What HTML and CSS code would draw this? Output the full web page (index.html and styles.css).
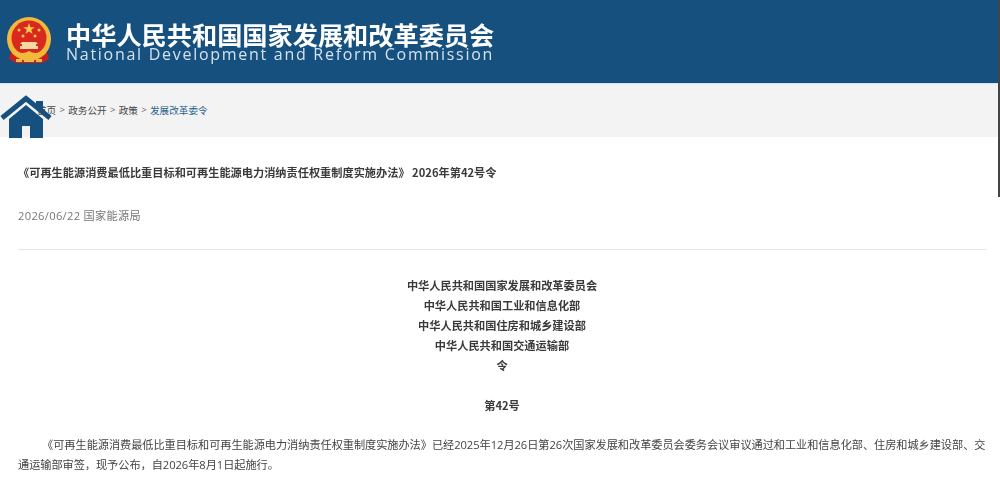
FILE: index.html
```html
<!DOCTYPE html>
<html lang="zh-CN">
<head>
<meta charset="utf-8">
<title>发展改革委令</title>
<link rel="stylesheet" href="styles.css">
</head>
<body>
<header class="site-header">
  <svg class="emblem" width="46" height="50" viewBox="0 0 46 50" aria-hidden="true">
    <path d="M6 33 L3 43 L10 47 H36 L43 43 L40 33 Z" fill="#c8201c"/>
    <circle cx="23" cy="23" r="22" fill="#f3b93b"/>
    <circle cx="23" cy="22" r="17.5" fill="#d9281e"/>
    <path d="M23 7l1.4 4.2h4.4l-3.6 2.6 1.4 4.2-3.6-2.6-3.6 2.6 1.4-4.2-3.6-2.6h4.4z" fill="#f8cf4a"/>
    <circle cx="13" cy="14" r="1.5" fill="#f8cf4a"/>
    <circle cx="33" cy="14" r="1.5" fill="#f8cf4a"/>
    <circle cx="17" cy="20" r="1.5" fill="#f8cf4a"/>
    <circle cx="29" cy="20" r="1.5" fill="#f8cf4a"/>
    <path d="M16 26h14l2 2h-2v2h2v3H14v-3h2v-2h-2z" fill="#f5d9a0"/>
    <path d="M8 33 Q15 40 23 35 Q31 40 38 33 L40 37 Q31 45 23 40 Q15 45 6 37 Z" fill="#f3b93b"/>
    <path d="M18 41h10v5H18z" fill="#f3b93b"/>
    <path d="M10 43h6v3h-6zM30 43h6v3h-6z" fill="#f3b93b"/>
  </svg>
  <div class="brand">
    <div class="brand-cn">中华人民共和国国家发展和改革委员会</div>
    <div class="brand-en">National Development and Reform Commission</div>
  </div>
</header>

<nav class="crumbs">
  <a class="crumb">首页</a><span class="sep">&gt;</span>
  <a class="crumb">政务公开</a><span class="sep">&gt;</span>
  <a class="crumb">政策</a><span class="sep">&gt;</span>
  <a class="crumb current">发展改革委令</a>
  <svg class="home" width="52" height="43" viewBox="0 0 52 43" aria-hidden="true">
    <path d="M36 6h7v12l-7-5z" fill="#15507f"/>
    <path d="M2 23 L26 3.5 L50 23" fill="none" stroke="#15507f" stroke-width="5"/>
    <path d="M26 10 L43 24 V43 H30 V31 H22 V43 H9 V24 Z" fill="#15507f"/>
  </svg>
</nav>

<main class="article">
  <h1 class="title">《可再生能源消费最低比重目标和可再生能源电力消纳责任权重制度实施办法》 2026年第42号令</h1>
  <div class="meta">2026/06/22 国家能源局</div>
  <div class="content">
    <p class="center">中华人民共和国国家发展和改革委员会</p>
    <p class="center">中华人民共和国工业和信息化部</p>
    <p class="center">中华人民共和国住房和城乡建设部</p>
    <p class="center">中华人民共和国交通运输部</p>
    <p class="center">令</p>
    <p class="center number">第42号</p>
    <p class="para">《可再生能源消费最低比重目标和可再生能源电力消纳责任权重制度实施办法》已经2025年12月26日第26次国家发展和改革委员会委务会议审议通过和工业和信息化部、住房和城乡建设部、交通运输部审签，现予公布，自2026年8月1日起施行。</p>
  </div>
</main>

<div class="scroll-thumb"></div>
</body>
</html>
```
FILE: styles.css
```css
* { box-sizing: border-box; }
html, body { margin: 0; padding: 0; height: 480px; overflow: hidden; background: #fff; }
body { font-family: "Open Sans", "Noto Sans CJK SC", sans-serif; color: #333; position: relative; }

.site-header {
  height: 84px;
  background: #15507f;
  border-bottom: 1px solid #cfe6f7;
  display: flex;
  align-items: flex-start;
  padding: 16px 0 0 6px;
  gap: 14px;
}
.emblem { filter: blur(.4px); flex: none; }
.brand { color: #fff; filter: blur(.3px); }
.brand-cn {
  font-family: "Noto Sans CJK SC", sans-serif;
  font-size: 25.2px;
  font-weight: 700;
  line-height: 24px;
  margin-top: 6px;
  white-space: nowrap;
}
.brand-en {
  font-family: "Open Sans", sans-serif;
  font-size: 16px;
  line-height: 15px;
  margin-top: 1px;
  letter-spacing: 1.72px;
  color: #d5e2ee;
  white-space: nowrap;
}

.crumbs {
  height: 53px;
  background: #f3f3f3;
  position: relative;
  display: flex;
  align-items: center;
  padding: 0 0 2px 37px;
  font-family: "Noto Sans CJK SC", sans-serif;
  font-size: 9.6px;
  color: #444;
}
.home { position: absolute; left: 0; top: 11px; filter: blur(.4px); }
.crumb { position: relative; }
.current { color: #2a5f8c; }
.sep { margin: 0 3.3px; color: #666; font-family: "Open Sans", sans-serif; }

.article { padding: 0 14px 0 18px; filter: blur(.25px); }
.title {
  margin: 0;
  padding-top: 27px;
  font-family: "Noto Sans CJK SC", sans-serif;
  font-size: 11.2px;
  line-height: 16px;
  font-weight: 700;
  color: #3a3a3a;
  white-space: nowrap;
}
.meta {
  margin-top: 28px;
  padding-bottom: 25px;
  border-bottom: 1px solid #e6e6e6;
  font-size: 11.2px;
  line-height: 16px;
  letter-spacing: .3px;
  color: #777;
  font-family: "Open Sans", "Noto Sans CJK SC", sans-serif;
}
.content { padding-top: 25px; font-size: 11.2px; }
.content p { margin: 0; line-height: 20px; }
.center {
  text-align: center;
  font-weight: 700;
  color: #3a3a3a;
  font-family: "Noto Sans CJK SC", sans-serif;
}
.number { margin-top: 20px !important; }
.para {
  margin-top: 20px !important;
  text-indent: 2.15em;
  letter-spacing: -.05px;
  color: #444;
  font-size: 11.2px;
}

.scroll-thumb {
  position: absolute;
  right: 0;
  top: 0;
  width: 2px;
  height: 197px;
  background: #444;
}
```
